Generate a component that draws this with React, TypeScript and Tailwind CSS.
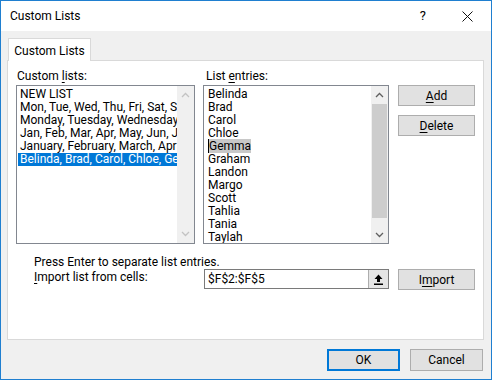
import React from "react";

const customLists = [
  "NEW LIST",
  "Mon, Tue, Wed, Thu, Fri, Sat, Sun",
  "Monday, Tuesday, Wednesday, Thursday",
  "Jan, Feb, Mar, Apr, May, Jun, Jul, Aug",
  "January, February, March, April, May",
  "Belinda, Brad, Carol, Chloe, Gemma",
];

const entries = [
  "Belinda",
  "Brad",
  "Carol",
  "Chloe",
  "Gemma",
  "Graham",
  "Landon",
  "Margo",
  "Scott",
  "Tahlia",
  "Tania",
  "Taylah",
];

function Chevron({ up, dim }: { up?: boolean; dim?: boolean }) {
  return (
    <svg width="9" height="6" viewBox="0 0 9 6" className="block">
      <polyline
        points={up ? "1,5 4.5,1.5 8,5" : "1,1 4.5,4.5 8,1"}
        fill="none"
        stroke={dim ? "#c3c3c3" : "#606060"}
        strokeWidth="1.3"
      />
    </svg>
  );
}

function Btn({
  children,
  className = "w-[77px] h-[21px] border border-[#adadad]",
}: {
  children: React.ReactNode;
  className?: string;
}) {
  return (
    <button
      className={
        "bg-[#e1e1e1] text-[12px] text-black flex items-center justify-center shrink-0 " + className
      }
    >
      {children}
    </button>
  );
}

export default function App() {
  return (
    <div
      className="w-[492px] h-[380px] border border-[#1f7fd0] bg-[#f0f0f0] flex flex-col text-[12px] text-black overflow-hidden"
      style={{ fontFamily: 'Roboto, "Noto Sans", sans-serif' }}
    >
      {/* title bar */}
      <div className="h-[30px] bg-white flex items-center pl-[9px] shrink-0">
        <span className="text-[12px] leading-none">Custom Lists</span>
        <span className="ml-auto mr-[36px] text-[13px]">?</span>
        <svg width="11" height="11" viewBox="0 0 11 11" className="mr-[18px]">
          <path d="M0.5 0.5 L10.5 10.5 M10.5 0.5 L0.5 10.5" stroke="#111" strokeWidth="1" />
        </svg>
      </div>

      <div className="pl-[6px] pr-[7px] pt-[7px]">
        {/* tab */}
        <div className="w-[83px] h-[23px] ml-[1px] bg-white border border-b-0 border-[#d9d9d9] flex items-center justify-center relative z-10 -mb-px">
          <span className="leading-none pt-[1px]">Custom Lists</span>
        </div>

        {/* panel */}
        <div className="h-[280px] bg-white border border-[#d9d9d9] pl-[8px] pt-[8px]">
          <div className="flex">
            {/* custom lists */}
            <div className="w-[179px]">
              <div className="h-[15px] leading-[15px] pl-[1px]">
                Custom <span className="underline underline-offset-2">l</span>ists:
              </div>
              <div className="mt-[1px] h-[159px] border border-[#828790] flex">
                <div className="flex-1 pt-[2px] pl-[1px] overflow-hidden">
                  {customLists.map((c, i) => (
                    <div
                      key={c}
                      className={
                        "h-[13px] leading-[13px] pl-[2px] whitespace-nowrap overflow-hidden " +
                        (i === 5 ? "bg-[#0078d7] text-white" : "")
                      }
                    >
                      {c}
                    </div>
                  ))}
                </div>
                <div className="w-[17px] bg-[#f0f0f0] flex flex-col items-center justify-between py-[6px]">
                  <Chevron up dim />
                  <Chevron dim />
                </div>
              </div>
            </div>

            {/* list entries */}
            <div className="w-[186px] ml-[8px]">
              <div className="h-[15px] leading-[15px] pl-[3px]">
                List <span className="underline underline-offset-2">e</span>ntries:
              </div>
              <div className="mt-[1px] h-[159px] border border-[#828790] flex">
                <div className="flex-1 pt-[2px] pl-[4px] overflow-hidden">
                  {entries.map((e) => (
                    <div key={e} className="h-[13px] leading-[13px]">
                      {e === "Gemma" ? (
                        <span className="bg-[#c8c8c8] border-l border-black">{e}</span>
                      ) : (
                        e
                      )}
                    </div>
                  ))}
                </div>
                <div className="w-[17px] bg-[#f0f0f0] flex flex-col items-center">
                  <div className="h-[17px] flex items-center justify-center">
                    <Chevron up />
                  </div>
                  <div className="w-[15px] h-[114px] bg-[#cdcdcd] mt-[1px]" />
                  <div className="mt-auto h-[17px] flex items-center justify-center">
                    <Chevron />
                  </div>
                </div>
              </div>
            </div>

            {/* buttons */}
            <div className="ml-[9px] pt-[16px] flex flex-col gap-[9px]">
              <Btn>
                <span className="underline underline-offset-2">A</span>dd
              </Btn>
              <Btn>
                <span className="underline underline-offset-2">D</span>elete
              </Btn>
            </div>
          </div>

          {/* import row */}
          <div className="mt-[11px] pl-[18px]">
            <div className="h-[15px] leading-[15px]">Press Enter to separate list entries.</div>
            <div className="flex items-start">
              <div className="w-[170px] h-[15px] leading-[15px]">
                <span className="underline underline-offset-2">I</span>mport list from cells:
              </div>
              <div className="w-[185px] h-[20px] -mt-[1px] border border-[#7a7a7a] flex">
                <div className="flex-1 pl-[3px] leading-[18px]">$F$2:$F$5</div>
                <div className="w-[20px] h-[18px] bg-[#e5e5e5] border-l border-[#adadad] flex items-center justify-center">
                  <svg width="9" height="11" viewBox="0 0 9 11">
                    <path d="M4.5 0.5 L8.5 5 L6 5 L6 8 L3 8 L3 5 L0.5 5 Z" fill="#000" />
                    <rect x="0" y="9.5" width="9" height="1.5" fill="#000" />
                  </svg>
                </div>
              </div>
              <div className="ml-[9px] -mt-[1px]">
                <Btn>
                  I<span className="underline underline-offset-2">m</span>port
                </Btn>
              </div>
            </div>
          </div>
        </div>
      </div>

      {/* dialog buttons */}
      <div className="flex justify-end gap-[10px] pr-[8px] mt-[9px]">
        <Btn className="w-[73px] h-[22px] border-2 border-[#0078d7]">OK</Btn>
        <Btn className="w-[73px] h-[22px] border border-[#adadad]">Cancel</Btn>
      </div>
    </div>
  );
}
